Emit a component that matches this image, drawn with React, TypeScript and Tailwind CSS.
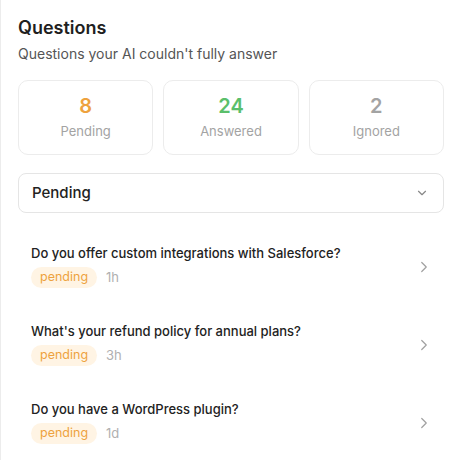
import { ChevronDown, ChevronRight } from "lucide-react";

const stats = [
  { value: "8", label: "Pending", color: "text-[#eea23e]" },
  { value: "24", label: "Answered", color: "text-[#5bbf6b]" },
  { value: "2", label: "Ignored", color: "text-[#a3a3a3]" },
];

const questions = [
  { text: "Do you offer custom integrations with Salesforce?", age: "1h" },
  { text: "What's your refund policy for annual plans?", age: "3h" },
  { text: "Do you have a WordPress plugin?", age: "1d" },
];

export default function App() {
  return (
    <div className="min-h-screen w-full bg-white border-l border-[#ececec] font-['Inter',sans-serif] text-[#1f1f1f]">
      <div className="pl-[17px] pr-[16px] pt-[16px]">
        <h1 className="text-[18px] font-semibold leading-6">Questions</h1>
        <p className="mt-[4px] text-[14px] text-[#555] leading-5">Questions your AI couldn't fully answer</p>

        <div className="mt-[16px] grid grid-cols-3 gap-[10px]">
          {stats.map((s) => (
            <div key={s.label} className="h-[75px] rounded-[10px] border border-[#ececec] flex flex-col items-center justify-center">
              <div className={`text-[20px] font-semibold leading-6 ${s.color}`}>{s.value}</div>
              <div className="mt-[3px] text-[13px] text-[#a3a3a3] leading-5">{s.label}</div>
            </div>
          ))}
        </div>

        <button className="mt-[18px] w-full h-[40px] rounded-[8px] border border-[#e5e5e5] flex items-center justify-between pl-[13px] pr-[14px]">
          <span className="text-[15px] font-medium text-[#222]">Pending</span>
          <ChevronDown className="w-[14px] h-[14px] text-[#888]" strokeWidth={2} />
        </button>

        <div className="mt-[21px] flex flex-col">
          {questions.map((q) => (
            <div key={q.text} className="h-[78px] flex items-start justify-between pl-[13px] pr-[11px] pt-[9px]">
              <div className="flex flex-col">
                <div className="text-[13px] font-medium text-[#222] leading-5">{q.text}</div>
                <div className="mt-[4px] flex items-center gap-[9px]">
                  <span className="h-[21px] px-[9px] rounded-full bg-[#fff4e4] text-[#eea23e] text-[12.5px] flex items-center">pending</span>
                  <span className="text-[13px] text-[#b0b0b0]">{q.age}</span>
                </div>
              </div>
              <ChevronRight className="mt-[15px] w-[18px] h-[18px] text-[#a0a0a0]" strokeWidth={1.6} />
            </div>
          ))}
        </div>
      </div>
    </div>
  );
}
